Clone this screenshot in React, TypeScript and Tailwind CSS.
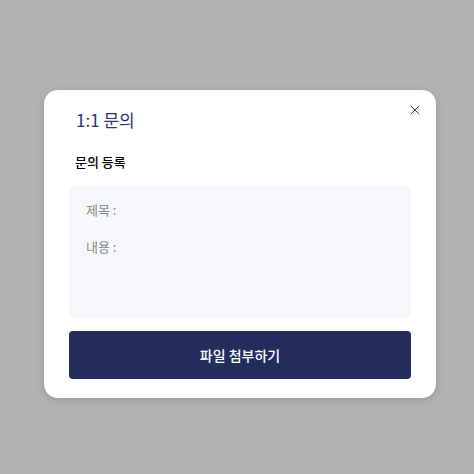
import React from 'react';
import { X } from 'lucide-react';

const font = { fontFamily: '"Noto Sans CJK KR", "Noto Sans", sans-serif' };

export default function App() {
  return (
    <div className="w-[474px] h-[474px] bg-[#b2b2b2] flex items-center justify-center pl-[6px] pt-[14px]" style={font}>
      {/* Inquiry modal */}
      <div className="relative w-[392px] h-[308px] bg-white rounded-[14px] shadow-[0_2px_8px_rgba(0,0,0,0.15)] px-[25px] pt-[18px]">
        <button className="absolute right-[13px] top-[12px] text-[#333]">
          <X className="w-[16px] h-[16px]" strokeWidth={1.4} />
        </button>
        <h2 className="pl-[7px] text-[17px] leading-[24px] text-[#283474]">1:1 문의</h2>
        <p className="mt-[20px] pl-[6px] text-[13px] leading-[20px] font-medium text-black">문의 등록</p>
        <div className="mt-[13px] h-[134px] bg-[#f7f8fc] rounded-[6px] px-[17px] pt-[15px]">
          <p className="text-[13px] leading-[20px] text-[#888888]">제목 :</p>
          <p className="mt-[17px] text-[13px] leading-[20px] text-[#888888]">내용 :</p>
        </div>
        <button className="mt-[12px] w-full h-[48px] rounded-[4px] bg-[#232c5b] text-white text-[14px] font-medium">
          파일 첨부하기
        </button>
      </div>
    </div>
  );
}
